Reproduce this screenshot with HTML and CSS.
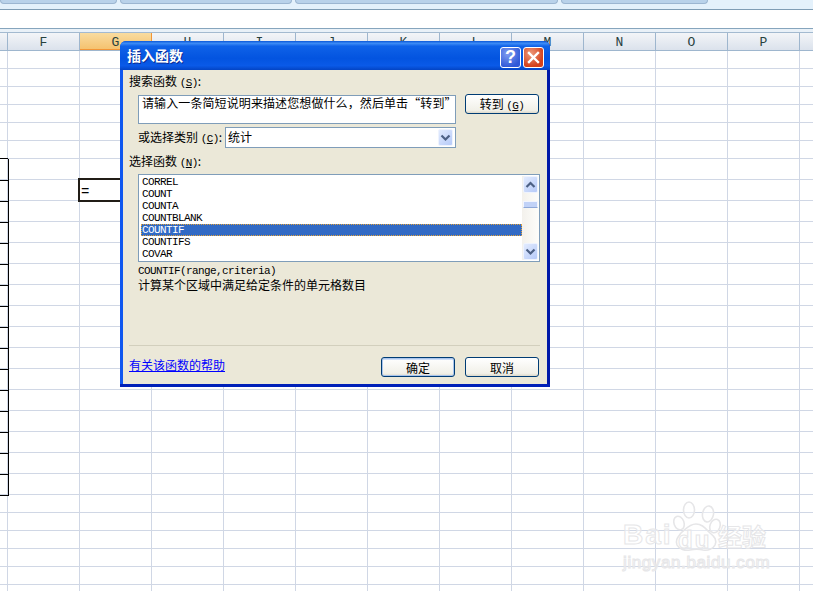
FILE: index.html
```html
<!DOCTYPE html>
<html lang="zh">
<head>
<meta charset="utf-8">
<title>插入函数</title>
<link rel="stylesheet" href="styles.css">
</head>
<body>
<div class="app">
  <div class="ribbon">
    <div class="tabs">
      <div class="tab t1"></div>
      <div class="tab t2"></div>
      <div class="tab t3"></div>
      <div class="tab t4"></div>
    </div>
  </div>
  <div class="formula"></div>
  <div class="gap"></div>
  <div class="head">
    <div class="hc first"></div>
    <div class="hc">F</div>
    <div class="hc sel">G</div>
    <div class="hc">H</div>
    <div class="hc">I</div>
    <div class="hc">J</div>
    <div class="hc">K</div>
    <div class="hc">L</div>
    <div class="hc">M</div>
    <div class="hc">N</div>
    <div class="hc">O</div>
    <div class="hc">P</div>
    <div class="hc rest"></div>
  </div>
  <div class="sheet">
    <div class="row s"></div><div class="row s"></div><div class="row s"></div><div class="row s"></div><div class="row s"></div><div class="row s last-plain"></div>
    <div class="table">
      <div class="row t"></div>
      <div class="row t"><div class="active">=</div></div>
      <div class="row t"></div><div class="row t"></div>
      <div class="row t"></div><div class="row t"></div><div class="row t"></div><div class="row t"></div>
      <div class="row t"></div><div class="row t"></div><div class="row t"></div><div class="row t"></div>
      <div class="row t"></div><div class="row t"></div><div class="row t"></div><div class="row t"></div>
    </div>
    <div class="row s"></div><div class="row s"></div><div class="row s"></div><div class="row s"></div><div class="row s"></div>
  </div>
</div>

<section class="dialog">
  <header class="titlebar">
    <span class="title">插入函数</span>
    <span class="tb-btn help">?</span>
    <span class="tb-btn close">
      <svg width="13" height="13" viewBox="0 0 13 13"><path d="M2 2l9 9M11 2l-9 9" stroke="#fff" stroke-width="2.4" stroke-linecap="square" fill="none"/></svg>
    </span>
  </header>
  <div class="client">
    <div class="lbl l-search">搜索函数 <span class="lat">(<u>S</u>)</span>:</div>
    <div class="search-row">
      <div class="search">请输入一条简短说明来描述您想做什么，然后单击“转到”</div>
      <button class="btn">转到 <span class="lat">(<u>G</u>)</span></button>
    </div>
    <div class="cat-row">
      <span class="lbl">或选择类别 <span class="lat">(<u>C</u>)</span>:</span>
      <div class="combo">
        <span class="combo-val">统计</span>
        <span class="sbtn combo-btn"><svg width="11" height="8" viewBox="0 0 11 8"><path d="M1.5 1.5l4 4 4-4" stroke="#4d6185" stroke-width="2.2" fill="none"/></svg></span>
      </div>
    </div>
    <div class="lbl l-pick">选择函数 <span class="lat">(<u>N</u>)</span>:</div>
    <div class="list">
      <div class="items">
        <div class="item">CORREL</div>
        <div class="item">COUNT</div>
        <div class="item">COUNTA</div>
        <div class="item">COUNTBLANK</div>
        <div class="item on">COUNTIF</div>
        <div class="item">COUNTIFS</div>
        <div class="item">COVAR</div>
      </div>
      <div class="scroll">
        <span class="sbtn up"><svg width="11" height="8" viewBox="0 0 11 8"><path d="M1.5 6l4-4 4 4" stroke="#4d6185" stroke-width="2.2" fill="none"/></svg></span>
        <span class="thumb"></span>
        <span class="sbtn down"><svg width="11" height="8" viewBox="0 0 11 8"><path d="M1.5 1.5l4 4 4-4" stroke="#4d6185" stroke-width="2.2" fill="none"/></svg></span>
      </div>
    </div>
    <div class="sig">COUNTIF(range,criteria)</div>
    <div class="desc">计算某个区域中满足给定条件的单元格数目</div>
    <div class="spacer"></div>
    <div class="sep"></div>
    <div class="foot">
      <a class="link" href="#">有关该函数的帮助</a>
      <div class="foot-btns">
        <button class="btn ok">确定</button>
        <button class="btn">取消</button>
      </div>
    </div>
  </div>
</section>

<div class="mark">
  <svg class="paw" width="56" height="52" viewBox="0 0 56 52">
    <g fill="rgba(255,255,255,.45)" stroke="#e6e6e8" stroke-width="1.6">
      <ellipse cx="10" cy="22" rx="5" ry="7" transform="rotate(-20 10 22)"/>
      <ellipse cx="20" cy="9" rx="5.5" ry="8"/>
      <ellipse cx="39" cy="13" rx="5.5" ry="8" transform="rotate(10 39 13)"/>
      <ellipse cx="46" cy="25" rx="5" ry="7" transform="rotate(20 46 25)"/>
      <path d="M27 23c6 0 9 4 14 9 5 4 7 7 5 12-2 4-7 6-12 5-4-1-8-1-13 0-5 1-11-1-13-5-2-5 1-8 4-12 5-4 8-9 15-9z"/>
    </g>
  </svg>
  <span class="wm bai">Bai</span>
  <span class="wm du">du</span>
  <span class="wm jy">经验</span>
  <span class="wm url">jingyan.baidu.com</span>
</div>
</body>
</html>
```

FILE: styles.css
```css
* { box-sizing: border-box; }
html, body { margin: 0; padding: 0; }
body {
  width: 813px;
  height: 591px;
  overflow: hidden;
  background: #fff;
  position: relative;
  font-family: "Noto Sans CJK SC", "Liberation Sans", sans-serif;
  font-size: 12px;
  color: #000;
}

/* ---------- Excel backdrop ---------- */
.ribbon {
  height: 10px;
  background: #e4f1fb;
  border-bottom: 1px solid #7f9db5;
}
.tabs { display: flex; gap: 3px; }
.tab {
  height: 4px;
  background: #b9d2ea;
  border: 1px solid #9cb6d1;
  border-top: 0;
  border-radius: 0 0 4px 4px;
}
.t1 { width: 117px; }
.t2 { width: 172px; }
.t3 { width: 263px; }
.t4 { width: 147px; }

.formula { height: 19px; background: #fff; border-bottom: 1px solid #86a5bd; }
.gap { height: 4px; background: #e9f1f8; border-bottom: 1px solid #a3bad0; }

.head {
  display: flex;
  height: 18px;
  background: linear-gradient(#f3f5f8, #dbe2ec);
  border-bottom: 1px solid #9eb6ce;
}
.hc {
  width: 72px;
  flex: none;
  border-right: 1px solid #9eb6ce;
  text-align: center;
  font: 13px/19px "Liberation Mono", monospace;
  color: #27413e;
}
.hc.first { width: 8px; }
.hc.rest { width: 14px; border-right: 0; }
.hc.sel {
  background: linear-gradient(#f9dca0, #f5c26f);
  border-right-color: #f29536;
  border-bottom: 1px solid #f29536;
}

.sheet {
  background-image: repeating-linear-gradient(90deg, transparent 0 7px, #d0d7e5 7px 8px, transparent 8px 72px);
  height: 540px;
}
.row { border-bottom: 1px solid #d0d7e5; position: relative; }
.row.s { height: 18px; }
.row.t { height: 21px; }
.row.t::before {
  content: "";
  position: absolute;
  left: 0;
  top: 0;
  width: 8px;
  height: 21px;
  border-right: 1px solid #000;
  border-bottom: 1px solid #000;
}
.row.last-plain::before {
  content: "";
  position: absolute;
  left: 0;
  bottom: -1px;
  width: 8px;
  height: 1px;
  background: #000;
}
.active {
  position: absolute;
  left: 78px;
  top: -2px;
  width: 44px;
  height: 24px;
  border: 2px solid #211d16;
  border-right: 0;
  background: #fff;
  font: 14px/21px "Liberation Mono", monospace;
  padding: 2px 0 0 1px;
}

/* ---------- Dialog ---------- */
.dialog {
  position: absolute;
  left: 120px;
  top: 41px;
  width: 430px;
  height: 346px;
  display: flex;
  flex-direction: column;
  background: linear-gradient(90deg, #0f57f0, #0a3ed8 50%, #0018a8);
  box-shadow: inset 0 -3px 0 #0020b8;
  border-radius: 6px 6px 0 0;
}
.titlebar {
  height: 29px;
  flex: none;
  display: flex;
  align-items: center;
  gap: 2px;
  padding: 5px 6px 2px 7px;
  border-radius: 6px 6px 0 0;
  background: linear-gradient(#0a57d8 0, #3d8cf6 8%, #0f62e8 18%, #0354e0 60%, #0a5ae8 85%, #0344c4 100%);
}
.title {
  flex: 1;
  margin-top: -4px;
  color: #fff;
  font-weight: 700;
  font-size: 14px;
  line-height: 18px;
  text-shadow: 1px 1px 0 #0b2d94;
}
.tb-btn {
  width: 21px;
  height: 21px;
  border: 1px solid #fff;
  border-radius: 3px;
  display: flex;
  align-items: center;
  justify-content: center;
}
.help {
  background: radial-gradient(circle at 35% 30%, #7f9df0, #2f58d8 75%);
  color: #fff;
  font: 700 18px/19px "Liberation Sans", sans-serif;
}
.close { background: radial-gradient(circle at 35% 30%, #ee9a7c, #d4411c 70%); }
.client {
  flex: 1;
  margin: 0 3px 3px 3px;
  background: #ebe8d8;
  padding: 3px 8px 0 6px;
  display: flex;
  flex-direction: column;
}
.lbl { line-height: 16px; white-space: nowrap; }
.lat { font-family: "Liberation Mono", monospace; font-size: 11px; letter-spacing: -.6px; }
.l-search { height: 17px; }
.search-row { display: flex; justify-content: space-between; margin: 4px 0 0 9px; height: 30px; }
.search {
  width: 318px;
  height: 29px;
  margin-top: 1px;
  background: #fff;
  border: 1px solid #7f9db9;
  padding: 0 0 0 3px;
  line-height: 13px;
  letter-spacing: .1px;
  white-space: nowrap;
}
.btn {
  width: 74px;
  height: 20px;
  padding: 0;
  font: inherit;
  line-height: 17px;
  border: 1px solid #003c74;
  border-radius: 3px;
  background: linear-gradient(#fff, #f1f0e8 85%, #dcd8ca);
  color: #000;
}
.cat-row { display: flex; align-items: center; gap: 3px; margin: 3px 0 0 9px; height: 21px; }
.combo {
  width: 231px;
  height: 21px;
  background: #fff;
  border: 1px solid #7f9db9;
  display: flex;
  justify-content: space-between;
  align-items: center;
  padding: 1px 1px 1px 2px;
}
.combo-val { padding-bottom: 2px; }
.sbtn {
  width: 15px;
  height: 17px;
  display: flex;
  align-items: center;
  justify-content: center;
  background: linear-gradient(135deg, #e2ebfe, #b6caf8);
  border: 1px solid #eef3fe;
  border-radius: 2px;
}
.combo-btn { margin-right: 1px; }
.l-pick { margin-top: 5px; height: 17px; }
.list {
  display: flex;
  margin: 4px 0 0 9px;
  width: 402px;
  height: 88px;
  background: #fff;
  border: 1px solid #7f9db9;
  padding: 1px 0 1px 2px;
}
.items { flex: 1; }
.item {
  height: 12px;
  font: 11px/12px "Liberation Mono", monospace;
  letter-spacing: -.6px;
  padding-left: 1px;
}
.on {
  background: #316ac5;
  color: #fff;
  outline: 1px dotted #e2a23a;
  outline-offset: -1px;
}
.scroll {
  width: 17px;
  background: linear-gradient(90deg, #f3f1ec, #fdfdfa);
  display: flex;
  flex-direction: column;
  align-items: center;
}
.thumb {
  width: 15px;
  height: 7px;
  margin-top: 8px;
  background: #c1d2f7;
  border: 1px solid #f2f5fe;
  border-bottom-color: #8ea8d8;
}
.down { margin-top: auto; }
.sig {
  margin: 3px 0 0 9px;
  font: 11px/12px "Liberation Mono", monospace;
  letter-spacing: -.6px;
}
.desc { margin: 1px 0 0 9px; line-height: 14px; }
.spacer { flex: 1; }
.sep { height: 1px; background: #d2cfbd; margin-right: -1px; }
.foot { height: 38px; display: flex; justify-content: space-between; padding-top: 11px; }
.link { color: #00f; text-decoration: underline; line-height: 16px; }
.foot-btns { display: flex; gap: 10px; }
.ok { box-shadow: inset 0 0 0 1px #a9c4ec, inset 0 2px 0 #cfdff7; }

/* ---------- Watermark ---------- */
.mark {
  position: absolute;
  left: 620px;
  top: 495px;
  width: 170px;
  height: 80px;
}
.paw { position: absolute; left: 49px; top: 6px; }
.wm {
  position: absolute;
  color: rgba(255, 255, 255, .45);
  -webkit-text-stroke: 1px #e6e6e8;
  font-family: "Liberation Sans", "Noto Sans CJK SC", sans-serif;
  font-weight: 700;
  white-space: nowrap;
}
.bai { left: 3px; top: 24px; font-size: 28px; line-height: 32px; letter-spacing: 2px; }
.du { left: 58px; top: 29px; font-size: 24px; line-height: 32px; letter-spacing: 2px; }
.jy { left: 98px; top: 25px; font-size: 24px; line-height: 32px; font-family: "Noto Sans CJK SC", sans-serif; }
.url { left: 3px; top: 58px; font-size: 17px; line-height: 20px; letter-spacing: .6px; font-weight: 400; }
```
